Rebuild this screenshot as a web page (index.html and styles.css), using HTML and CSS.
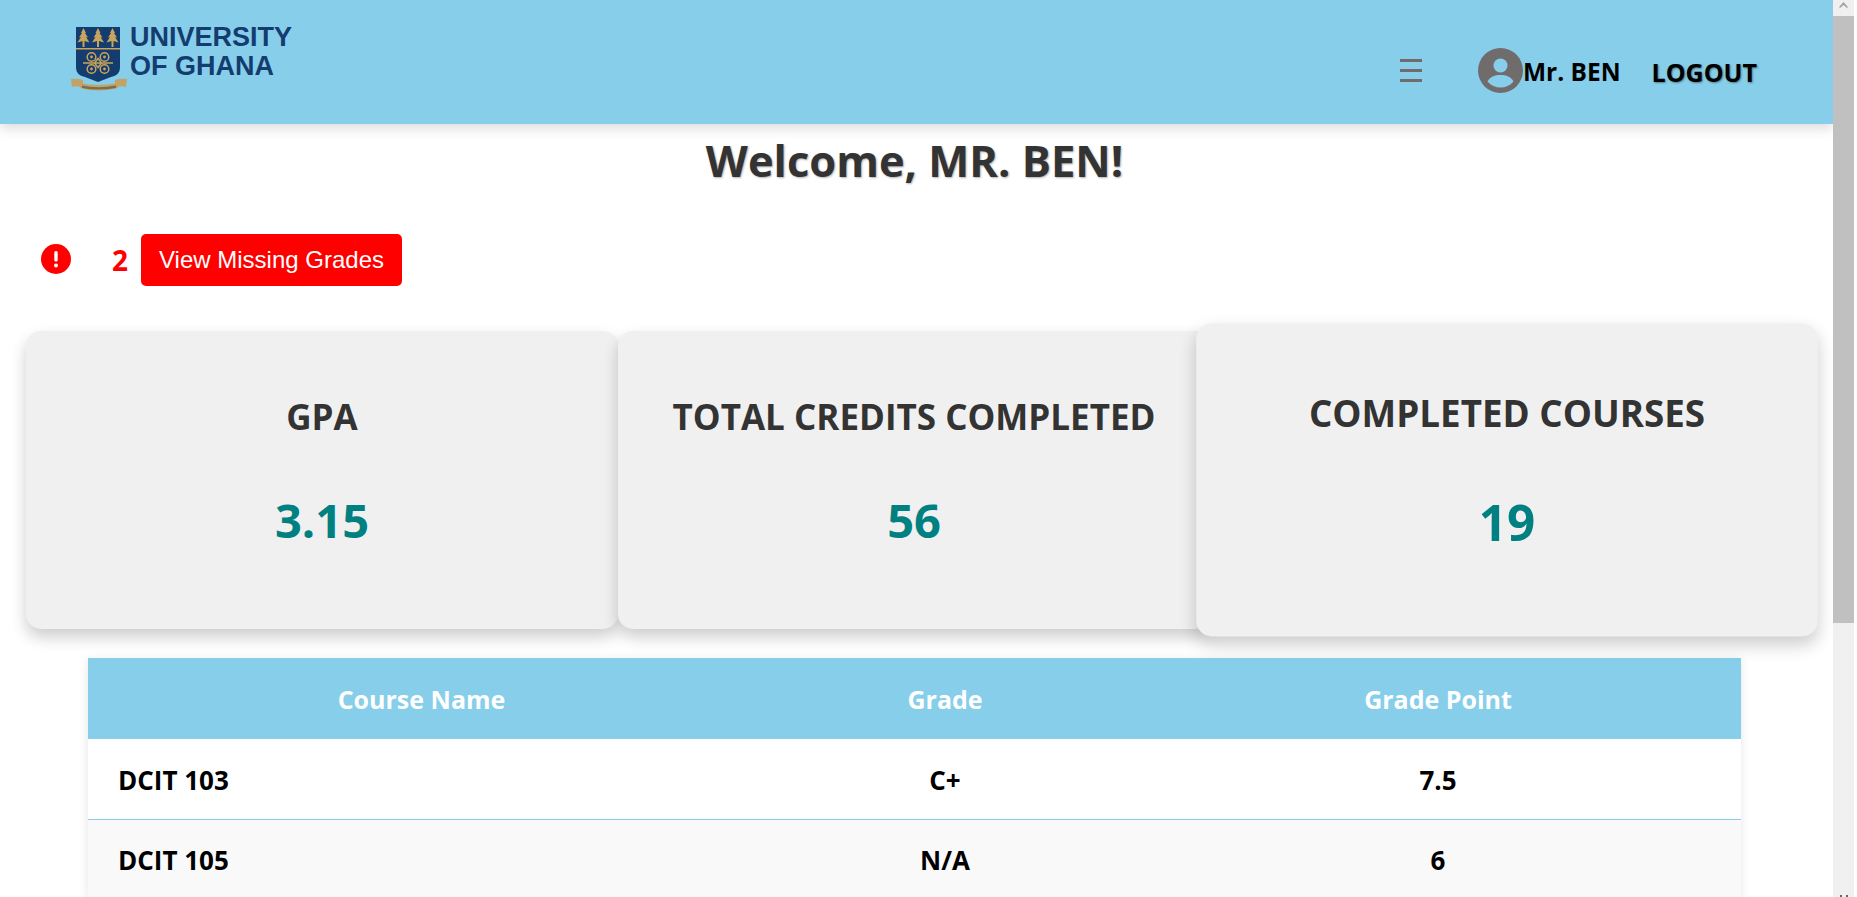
FILE: index.html
```html
<!DOCTYPE html>
<html lang="en">
<head>
    <meta charset="UTF-8">
    <meta name="viewport" content="width=device-width, initial-scale=1.0">
    <title>Student Dashboard</title>
    <link rel="stylesheet" href="styles.css">
</head>
<body>
    <div class="page">
        <header class="topbar">
            <div class="brand">
                <svg class="crest" viewBox="0 0 56 66" aria-hidden="true">
                    <defs>
                        <path id="tree" d="M0 2L2.500 7H1.500L4.500 11.500L2.500 11L6 16.500L1 15V21H-1V15L-6 16.500L-2.500 11L-4.500 11.500L-1.500 7H-2.500Z"/>
                    </defs>
                    <path d="M5 1H49V42Q49 49 40 51L27 56L14 51Q5 49 5 42Z" fill="#153c6f"/>
                    <rect x="5" y="22" width="44" height="1.500" fill="#c9a45c"/>
                    <g fill="#c9a45c">
                        <use href="#tree" x="12.500"/>
                        <use href="#tree" x="27"/>
                        <use href="#tree" x="41.500"/>
                    </g>
                    <g fill="none" stroke="#c9a45c" stroke-width="1.500">
                        <circle cx="20.500" cy="31" r="4.300"/>
                        <circle cx="33.500" cy="31" r="4.300"/>
                        <circle cx="20.500" cy="43" r="4.300"/>
                        <circle cx="33.500" cy="43" r="4.300"/>
                        <path d="M12 37H42M27 32.500L30.500 37L27 41.500L23.500 37Z"/>
                    </g>
                    <g fill="#c9a45c">
                        <circle cx="20.500" cy="31" r="1.400"/>
                        <circle cx="33.500" cy="31" r="1.400"/>
                        <circle cx="20.500" cy="43" r="1.400"/>
                        <circle cx="33.500" cy="43" r="1.400"/>
                    </g>
                    <g fill="#c2a266">
                        <path d="M0 53Q6 52 12 54V62Q6 59 1 61Z"/>
                        <path d="M56 53Q50 52 44 54V62Q50 59 55 61Z"/>
                        <path d="M9 57Q27 61 47 57V62Q27 67 9 62Z"/>
                    </g>
                    <path d="M11 59.500Q27 63 45 59.500V62Q27 65 11 62Z" fill="#7d6d4e"/>
                </svg>
                <div class="wordmark">UNIVERSITY<br>OF GHANA</div>
            </div>
            <nav class="topnav">
                <span class="menu-toggle" aria-label="Menu"><i></i><i></i><i></i></span>
                <div class="user">
                    <svg class="avatar" viewBox="0 0 45 45" aria-hidden="true">
                        <circle cx="22.500" cy="22.500" r="22.500" fill="#716c6c"/>
                        <circle cx="22.500" cy="17.500" r="7" fill="#87ceeb"/>
                        <path d="M9.500 33.500C12 28.500 17 27 22.500 27S33 28.500 35.500 33.500C32 37.500 27.500 39.500 22.500 39.500S13 37.500 9.500 33.500Z" fill="#87ceeb"/>
                    </svg>
                    <span class="user-name">Mr. BEN</span>
                </div>
                <a class="logout" href="#">LOGOUT</a>
            </nav>
        </header>

        <main>
            <h1 class="welcome">Welcome, MR. BEN!</h1>

            <div class="alert-row">
                <svg class="alert-icon" viewBox="0 0 30 30" aria-hidden="true">
                    <circle cx="15" cy="15" r="15" fill="#f00"/>
                    <rect x="13.300" y="7" width="3.400" height="10.500" rx="1.500" fill="#fff"/>
                    <circle cx="15" cy="21.500" r="2" fill="#fff"/>
                </svg>
                <span class="alert-count">2</span>
                <button class="alert-btn" type="button">View Missing Grades</button>
            </div>

            <section class="stats">
                <div class="stat-card">
                    <h2>GPA</h2>
                    <p>3.15</p>
                </div>
                <div class="stat-card">
                    <h2>TOTAL CREDITS COMPLETED</h2>
                    <p>56</p>
                </div>
                <div class="stat-card stat-card-hover">
                    <h2>COMPLETED COURSES</h2>
                    <p>19</p>
                </div>
            </section>

            <table class="grades">
                <thead>
                    <tr>
                        <th>Course Name</th>
                        <th>Grade</th>
                        <th>Grade Point</th>
                    </tr>
                </thead>
                <tbody>
                    <tr>
                        <td>DCIT 103</td>
                        <td>C+</td>
                        <td>7.5</td>
                    </tr>
                    <tr>
                        <td>DCIT 105</td>
                        <td>N/A</td>
                        <td>6</td>
                    </tr>
                </tbody>
            </table>
        </main>
    </div>

    <div class="scrollbar" aria-hidden="true">
        <div class="scroll-btn">
            <svg viewBox="0 0 21 16"><path d="M10.500 2L14.500 6.500V8.500L10.500 5L6.500 8.500V6.500Z" fill="#a3a3a3"/></svg>
        </div>
        <div class="scroll-thumb"></div>
        <div class="scroll-track"></div>
        <div class="scroll-end"><i></i><i></i></div>
    </div>
</body>
</html>
```

FILE: styles.css
```css
:root {
    --sky: #87ceeb;
    --card-bg: #f0f0f0;
    --dark: #333;
    --teal: #008080;
}

html, body {
    height: 100%;
}

body {
    margin: 0;
    display: flex;
    overflow: hidden;
    background-color: #fff;
    font-family: "Open Sans", "Noto Sans", sans-serif;
}

.page {
    flex: 1;
    min-width: 0;
    overflow: hidden;
}

/* top bar */
.topbar {
    height: 124px;
    background-color: var(--sky);
    box-shadow: 0 4px 12px rgba(0, 0, 0, 0.15);
    display: flex;
    justify-content: space-between;
    padding: 0 76px 0 71px;
}

.brand {
    display: flex;
    align-items: flex-start;
    gap: 3px;
    padding-top: 26px;
}

.crest {
    width: 56px;
    height: 66px;
}

.wordmark {
    margin-top: -3px;
    color: #153c6f;
    font-family: "Liberation Sans", Arial, sans-serif;
    font-size: 27px;
    font-weight: 700;
    line-height: 29px;
}

.topnav {
    display: flex;
    align-items: center;
    padding-top: 17px;
}

.menu-toggle {
    display: flex;
    flex-direction: column;
    gap: 7px;
    width: 22px;
    margin-right: 56px;
}

.menu-toggle i {
    height: 3px;
    background-color: #716c6c;
}

.user {
    display: flex;
    align-items: center;
}

.avatar {
    width: 45px;
    height: 45px;
}

.user-name, .logout {
    margin-top: 2px;
    font-size: 24.500px;
    font-weight: 700;
    color: #000;
    text-decoration: none;
}

.logout {
    margin-left: 31px;
    font-size: 25px;
    text-shadow: 1px 1px 2px rgba(0, 0, 0, 0.4);
}

/* main */
.welcome {
    margin: 10px 0 0;
    padding-right: 4px;
    text-align: center;
    font-size: 43.500px;
    font-weight: 700;
    line-height: 54px;
    color: var(--dark);
    text-shadow: 1px 1px 2px rgba(0, 0, 0, 0.3);
}

.alert-row {
    display: flex;
    align-items: center;
    height: 52px;
    margin-top: 46px;
    padding-left: 41px;
}

.alert-icon {
    width: 30px;
    height: 30px;
    margin: -2px 41px 0 0;
}

.alert-count {
    color: #f00;
    font-size: 28px;
    font-weight: 700;
    margin-right: 13px;
}

.alert-btn {
    height: 52px;
    padding: 0 18px;
    border: none;
    border-radius: 5px;
    background-color: #f00;
    color: #fff;
    font-family: "Liberation Sans", Arial, sans-serif;
    font-size: 24px;
}

/* stat cards */
.stats {
    display: flex;
    align-items: center;
    margin-top: 45px;
    padding-left: 26px;
}

.stat-card {
    width: 592px;
    height: 298px;
    flex-shrink: 0;
    box-sizing: border-box;
    padding-top: 62px;
    background-color: var(--card-bg);
    border-radius: 15px;
    box-shadow: 0 8px 16px rgba(0, 0, 0, 0.2);
    text-align: center;
}

.stat-card h2 {
    margin: 0;
    font-size: 35px;
    font-weight: 700;
    line-height: 48px;
    color: var(--dark);
}

.stat-card p {
    margin: 48px 0 0;
    font-size: 47px;
    font-weight: 700;
    line-height: 62px;
    color: var(--teal);
}

.stat-card-hover {
    margin-left: 1px;
    transform: scale(1.05);
}

/* grades table */
.grades {
    width: 1653px;
    margin: 29px 0 0 88px;
    border-collapse: collapse;
    table-layout: fixed;
    box-shadow: 0 2px 10px rgba(0, 0, 0, 0.1);
}

.grades th {
    height: 81px;
    padding: 0;
    background-color: var(--sky);
    color: #fff;
    font-size: 25px;
    font-weight: 700;
}

.grades th:nth-child(1) {
    width: 667px;
}

.grades th:nth-child(2) {
    width: 380px;
}

.grades td {
    height: 80px;
    box-sizing: border-box;
    padding: 2px 0 0;
    border-bottom: 1px solid var(--sky);
    color: #000;
    font-size: 26px;
    font-weight: 700;
    text-align: center;
}

.grades td:first-child {
    text-align: left;
    padding-left: 30px;
}

.grades tbody tr:nth-child(even) td {
    background-color: #f9f9f9;
}

/* window scrollbar */
.scrollbar {
    width: 21px;
    margin-right: 3px;
    flex-shrink: 0;
    display: flex;
    flex-direction: column;
    background-color: #f0f0f0;
}

.scroll-btn {
    height: 16px;
}

.scroll-btn svg {
    display: block;
    width: 21px;
    height: 16px;
}

.scroll-thumb {
    height: 607px;
    background-color: #c0c0c0;
}

.scroll-track {
    flex: 1;
}

.scroll-end {
    display: flex;
    justify-content: center;
    gap: 4px;
    height: 2px;
}

.scroll-end i {
    width: 2px;
    background-color: #666;
}
```
